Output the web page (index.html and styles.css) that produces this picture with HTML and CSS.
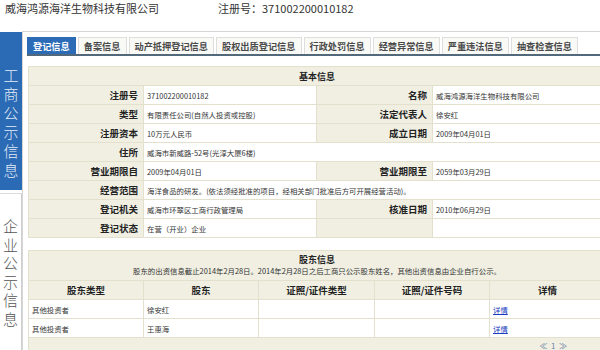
FILE: index.html
```html
<!DOCTYPE html>
<html lang="zh-CN">
<head>
<meta charset="utf-8">
<title>企业信用信息</title>
<link rel="stylesheet" href="styles.css">
</head>
<body>
<header class="top">
  <span class="name">威海鸿源海洋生物科技有限公司</span>
  <span class="reg">注册号：371002200010182</span>
</header>
<div class="main">
  <aside class="side">
    <div class="side-a">工商公示信息</div>
    <div class="side-b">企业公示信息</div>
  </aside>
  <section class="panel">
    <nav class="tabs">
      <span class="tab active">登记信息</span>
      <span class="tab">备案信息</span>
      <span class="tab">动产抵押登记信息</span>
      <span class="tab">股权出质登记信息</span>
      <span class="tab">行政处罚信息</span>
      <span class="tab">经营异常信息</span>
      <span class="tab">严重违法信息</span>
      <span class="tab">抽查检查信息</span>
    </nav>
    <table class="info">
      <colgroup><col class="c1"><col class="c2"><col class="c3"><col class="c4"></colgroup>
      <tr><th colspan="4" class="head">基本信息</th></tr>
      <tr><td class="lbl">注册号</td><td class="val">371002200010182</td><td class="lbl">名称</td><td class="val">威海鸿源海洋生物科技有限公司</td></tr>
      <tr><td class="lbl">类型</td><td class="val">有限责任公司(自然人投资或控股)</td><td class="lbl">法定代表人</td><td class="val">徐安红</td></tr>
      <tr><td class="lbl">注册资本</td><td class="val">10万元人民币</td><td class="lbl">成立日期</td><td class="val">2009年04月01日</td></tr>
      <tr><td class="lbl">住所</td><td class="val" colspan="3">威海市新威路-52号(光淳大厦6楼)</td></tr>
      <tr><td class="lbl">营业期限自</td><td class="val">2009年04月01日</td><td class="lbl">营业期限至</td><td class="val">2059年03月29日</td></tr>
      <tr><td class="lbl">经营范围</td><td class="val" colspan="3">海洋食品的研发。(依法须经批准的项目，经相关部门批准后方可开展经营活动)。</td></tr>
      <tr><td class="lbl">登记机关</td><td class="val">威海市环翠区工商行政管理局</td><td class="lbl">核准日期</td><td class="val">2010年06月29日</td></tr>
      <tr><td class="lbl">登记状态</td><td class="val">在营（开业）企业</td><td class="lbl"></td><td class="val"></td></tr>
    </table>
    <table class="holders">
      <colgroup><col class="h1"><col class="h2"><col class="h3"><col class="h4"><col class="h5"></colgroup>
      <tr><th colspan="5" class="head2">
        <div class="t">股东信息</div>
        <div class="note">股东的出资信息截止2014年2月28日。2014年2月28日之后工商只公示股东姓名，其他出资信息由企业自行公示。</div>
      </th></tr>
      <tr class="cols"><th>股东类型</th><th>股东</th><th>证照/证件类型</th><th>证照/证件号码</th><th>详情</th></tr>
      <tr><td class="val">其他投资者</td><td class="val">徐安红</td><td class="val"></td><td class="val"></td><td class="val"><a class="link" href="#">详情</a></td></tr>
      <tr><td class="val">其他投资者</td><td class="val">王惠海</td><td class="val"></td><td class="val"></td><td class="val"><a class="link" href="#">详情</a></td></tr>
      <tr><td colspan="5" class="pager">≪&nbsp;&nbsp;1&nbsp;&nbsp;≫</td></tr>
    </table>
  </section>
</div>
</body>
</html>
```
FILE: styles.css
```css
html, body {
  margin: 0;
  padding: 0;
  background: #fff;
}
body {
  width: 600px;
  height: 350px;
  overflow: hidden;
  font-family: "Noto Sans CJK SC", "Liberation Sans", sans-serif;
  color: #333;
}
.top {
  display: flex;
  gap: 59px;
  height: 31px;
  padding-left: 5px;
  font-size: 11px;
  line-height: 17px;
  color: #333;
}
.main {
  display: flex;
}
.side {
  width: 22px;
  flex: none;
  display: flex;
  flex-direction: column;
}
.side-a {
  margin-top: 1px;
  height: 158px;
  box-sizing: border-box;
  padding-top: 33px;
  background: #2b6ab4;
  color: #e4edf8;
  font-size: 15px;
  font-weight: 300;
  line-height: 19px;
  text-align: center;
}
.side-b {
  margin-top: 3px;
  height: 170px;
  box-sizing: border-box;
  padding-top: 23px;
  border-top: 1px solid #dcdcdc;
  border-right: 1px solid #cfcfcf;
  color: #555;
  font-size: 15px;
  font-weight: 300;
  line-height: 18.5px;
  text-align: center;
}
.panel {
  flex: 1;
  min-width: 0;
  overflow: hidden;
  border-top: 1px solid #d6d6d6;
  border-left: 1px solid #d6d6d6;
  padding: 5px 0 0 4px;
  height: 330px;
}
.tabs {
  display: flex;
  gap: 2px;
  border-bottom: 2px solid #51697a;
}
.tab {
  height: 17px;
  line-height: 16px;
  box-sizing: border-box;
  padding: 0 5px;
  font-size: 9.2px;
  font-weight: bold;
  color: #4a4a4a;
  background: #f9f9f6;
  border: 1px solid #dedede;
  border-bottom: none;
  white-space: nowrap;
}
.tab.active {
  background: #2c6bb5;
  border-color: #2c6bb5;
  color: #fff;
}
table {
  border-collapse: collapse;
  table-layout: fixed;
  width: 577px;
  margin-left: 1px;
}
.info {
  margin-top: 10px;
}
.holders {
  margin-top: 12px;
}
.c1 { width: 115px; }
.c2 { width: 173px; }
.c3 { width: 116px; }
.c4 { width: 173px; }
.h1 { width: 115px; }
.h2 { width: 115px; }
.h3 { width: 116px; }
.h4 { width: 115px; }
.h5 { width: 116px; }
tr {
  height: 19px;
}
td, th {
  padding: 0;
  border: 1px solid #e3e1cd;
  white-space: nowrap;
  overflow: hidden;
}
.head {
  background: #f0efe2;
  font-size: 9px;
  font-weight: bold;
  color: #222;
  text-align: center;
}
.lbl {
  background: #f0efe2;
  text-align: right;
  padding-right: 5px;
  font-size: 9.5px;
  font-weight: bold;
  color: #222;
}
.val {
  padding-left: 3px;
  font-size: 7.4px;
  color: #333;
  background: #fff;
}
.head2 {
  height: 26px;
  background: #f0efe2;
  text-align: center;
  vertical-align: top;
  padding-top: 3px;
}
.head2 .t {
  font-size: 9px;
  font-weight: bold;
  line-height: 11px;
  color: #222;
}
.head2 .note {
  font-size: 7.4px;
  font-weight: normal;
  line-height: 11px;
  color: #333;
}
.cols th {
  background: #f0efe2;
  font-size: 9.5px;
  font-weight: bold;
  color: #222;
  text-align: center;
}
.link {
  color: #1a3cc0;
  text-decoration: underline;
}
.pager {
  background: #f0efe2;
  text-align: right;
  vertical-align: top;
  padding: 2px 38px 0 0;
  font-size: 8px;
  line-height: 11px;
  color: #6e84a8;
}
```
